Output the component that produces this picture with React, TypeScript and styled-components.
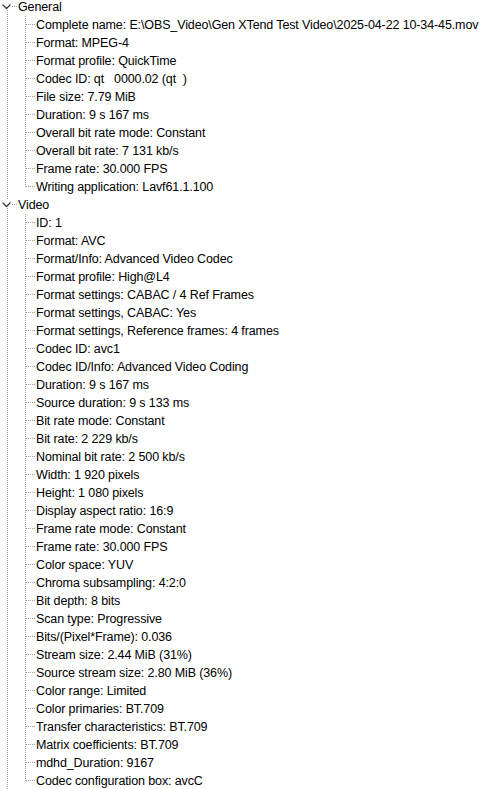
import React from "react";
import styled, { createGlobalStyle } from "styled-components";

const GlobalStyle = createGlobalStyle`
  html, body { margin: 0; padding: 0; background: #ffffff; }
  body { overflow: hidden; }
`;

type Section = { title: string; items: string[] };

const sections: Section[] = [
  {
    title: "General",
    items: [
      "Complete name: E:\\OBS_Video\\Gen XTend Test Video\\2025-04-22 10-34-45.mov",
      "Format: MPEG-4",
      "Format profile: QuickTime",
      "Codec ID: qt\u00a0\u00a0 0000.02 (qt\u00a0 )",
      "File size: 7.79 MiB",
      "Duration: 9 s 167 ms",
      "Overall bit rate mode: Constant",
      "Overall bit rate: 7 131 kb/s",
      "Frame rate: 30.000 FPS",
      "Writing application: Lavf61.1.100",
    ],
  },
  {
    title: "Video",
    items: [
      "ID: 1",
      "Format: AVC",
      "Format/Info: Advanced Video Codec",
      "Format profile: High@L4",
      "Format settings: CABAC / 4 Ref Frames",
      "Format settings, CABAC: Yes",
      "Format settings, Reference frames: 4 frames",
      "Codec ID: avc1",
      "Codec ID/Info: Advanced Video Coding",
      "Duration: 9 s 167 ms",
      "Source duration: 9 s 133 ms",
      "Bit rate mode: Constant",
      "Bit rate: 2 229 kb/s",
      "Nominal bit rate: 2 500 kb/s",
      "Width: 1 920 pixels",
      "Height: 1 080 pixels",
      "Display aspect ratio: 16:9",
      "Frame rate mode: Constant",
      "Frame rate: 30.000 FPS",
      "Color space: YUV",
      "Chroma subsampling: 4:2:0",
      "Bit depth: 8 bits",
      "Scan type: Progressive",
      "Bits/(Pixel*Frame): 0.036",
      "Stream size: 2.44 MiB (31%)",
      "Source stream size: 2.80 MiB (36%)",
      "Color range: Limited",
      "Color primaries: BT.709",
      "Transfer characteristics: BT.709",
      "Matrix coefficients: BT.709",
      "mdhd_Duration: 9167",
      "Codec configuration box: avcC",
    ],
  },
];

const DOT = "#a0a0a0";
const vDots = `repeating-linear-gradient(to bottom, ${DOT} 0 1px, transparent 1px 2px)`;
const hDots = `repeating-linear-gradient(to right, ${DOT} 0 1px, transparent 1px 2px)`;

const Tree = styled.div`
  display: flex;
  flex-direction: column;
  margin-top: -2px;
  font-family: "Liberation Sans", Arial, sans-serif;
  font-size: 12.5px;
  letter-spacing: -0.12px;
  color: #000000;
`;

const Row = styled.div`
  display: flex;
  align-items: center;
  height: 18px;
  white-space: nowrap;
`;

type GuideKind = "pipe" | "tee" | "elbow";

const Guide = styled.div<{ $kind: GuideKind }>`
  flex: none;
  width: 18px;
  height: 18px;
  background-image: ${(p) =>
    p.$kind === "pipe" ? vDots : `${vDots}, ${hDots}`};
  background-repeat: no-repeat;
  background-position: ${(p) =>
    p.$kind === "pipe" ? "7px 0" : "7px 0, 8px 8px"};
  background-size: ${(p) =>
    p.$kind === "pipe"
      ? "1px 18px"
      : p.$kind === "elbow"
      ? "1px 9px, 9px 1px"
      : "1px 18px, 9px 1px"};
`;

const Expander = styled.div<{ $topLine: boolean }>`
  flex: none;
  width: 18px;
  height: 18px;
  display: flex;
  align-items: center;
  background-image: ${vDots}, ${vDots}, ${hDots};
  background-repeat: no-repeat;
  background-position: 7px 0, 7px 12px, 12px 8px;
  background-size: ${(p) => (p.$topLine ? "1px 4px" : "0 0")}, 1px 6px, 5px 1px;
`;

const Chevron = styled.svg`
  display: block;
  margin-left: 2px;
  margin-top: -1px;
`;

const Label = styled.span`
  line-height: 18px;
`;

function ChevronDown() {
  return (
    <Chevron width="9" height="6" viewBox="0 0 9 6">
      <polyline
        points="0.6,0.6 4.5,4.5 8.4,0.6"
        fill="none"
        stroke="#333333"
        strokeWidth="1.3"
      />
    </Chevron>
  );
}

export default function App() {
  return (
    <>
      <GlobalStyle />
      <Tree>
        {sections.map((s, si) => (
          <React.Fragment key={s.title}>
            <Row>
              <Expander $topLine={si > 0}>
                <ChevronDown />
              </Expander>
              <Label>{s.title}</Label>
            </Row>
            {s.items.map((it, i) => (
              <Row key={i}>
                <Guide $kind="pipe" />
                <Guide $kind={i === s.items.length - 1 ? "elbow" : "tee"} />
                <Label>{it}</Label>
              </Row>
            ))}
          </React.Fragment>
        ))}
      </Tree>
    </>
  );
}
